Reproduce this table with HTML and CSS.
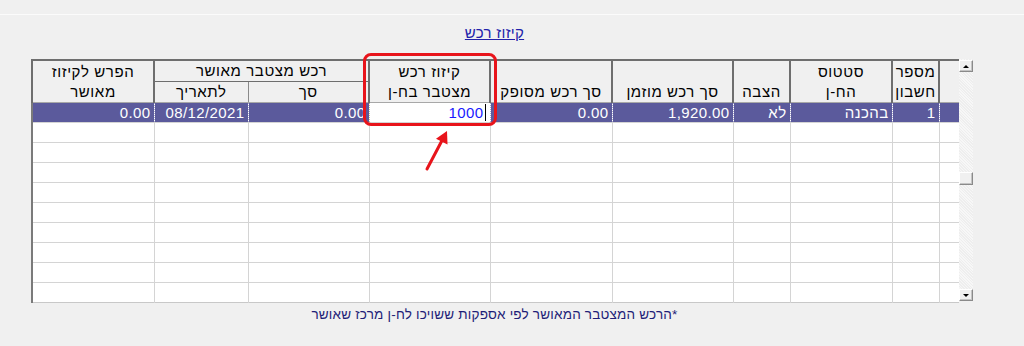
FILE: index.html
```html
<!DOCTYPE html>
<html lang="he">
<head>
<meta charset="utf-8">
<title>קיזוז רכש</title>
<link rel="stylesheet" href="styles.css">
</head>
<body>
<div class="topline"></div>
<div class="panel">
  <div class="title"><a href="#">קיזוז רכש</a></div>
  <div class="gridbox">
    <table class="grid" dir="rtl">
      <colgroup>
        <col style="width:20px"><col style="width:47px"><col style="width:102px"><col style="width:57px"><col style="width:121px"><col style="width:122px"><col style="width:121px"><col style="width:121px"><col style="width:94px"><col style="width:122px">
      </colgroup>
      <thead>
        <tr class="h1">
          <th rowspan="2" class="sel"></th>
          <th rowspan="2">מספר<br>חשבון</th>
          <th rowspan="2">סטטוס<br>הח-ן</th>
          <th rowspan="2">הצבה</th>
          <th rowspan="2">סך רכש מוזמן</th>
          <th rowspan="2">סך רכש מסופק</th>
          <th rowspan="2">קיזוז רכש<br>מצטבר בח-ן</th>
          <th colspan="2" class="group">רכש מצטבר מאושר</th>
          <th rowspan="2">הפרש לקיזוז<br>מאושר</th>
        </tr>
        <tr class="h2">
          <th>סך</th>
          <th>לתאריך</th>
        </tr>
      </thead>
      <tbody>
        <tr class="active">
          <td class="sel"></td>
          <td>1</td>
          <td>בהכנה</td>
          <td>לא</td>
          <td dir="ltr" class="num">1,920.00</td>
          <td dir="ltr" class="num">0.00</td>
          <td class="edit"><span class="caret">1000</span></td>
          <td dir="ltr" class="num">0.00</td>
          <td dir="ltr" class="num">08/12/2021</td>
          <td dir="ltr" class="num">0.00</td>
        </tr>
        <tr><td class="sel"></td><td></td><td></td><td></td><td></td><td></td><td></td><td></td><td></td><td></td></tr>
        <tr><td class="sel"></td><td></td><td></td><td></td><td></td><td></td><td></td><td></td><td></td><td></td></tr>
        <tr><td class="sel"></td><td></td><td></td><td></td><td></td><td></td><td></td><td></td><td></td><td></td></tr>
        <tr><td class="sel"></td><td></td><td></td><td></td><td></td><td></td><td></td><td></td><td></td><td></td></tr>
        <tr><td class="sel"></td><td></td><td></td><td></td><td></td><td></td><td></td><td></td><td></td><td></td></tr>
        <tr><td class="sel"></td><td></td><td></td><td></td><td></td><td></td><td></td><td></td><td></td><td></td></tr>
        <tr><td class="sel"></td><td></td><td></td><td></td><td></td><td></td><td></td><td></td><td></td><td></td></tr>
        <tr><td class="sel"></td><td></td><td></td><td></td><td></td><td></td><td></td><td></td><td></td><td></td></tr>
        <tr><td class="sel"></td><td></td><td></td><td></td><td></td><td></td><td></td><td></td><td></td><td></td></tr>
      </tbody>
    </table>
    <div class="scrollbar">
      <div class="sbtn up"><span class="tri-up"></span></div>
      <div class="track">
        <div class="thumb"></div>
      </div>
      <div class="sbtn down"><span class="tri-down"></span></div>
    </div>
  </div>
  <div class="note" dir="rtl">*הרכש המצטבר המאושר לפי אספקות ששויכו לח-ן מרכז שאושר</div>
</div>

<div class="highlight"></div>
<svg class="arrow" width="40" height="50" viewBox="0 0 40 50">
  <line x1="7" y1="44" x2="22" y2="15.5" stroke="#e8141b" stroke-width="3" stroke-linecap="round"/>
  <polygon points="27,6 27.5,19.5 16,13.8" fill="#e8141b"/>
</svg>
</body>
</html>
```

FILE: styles.css
```css
html, body {
  margin: 0;
  padding: 0;
}
body {
  background: #f0f0f0;
  font-family: "Liberation Sans", "DejaVu Sans", Arial, sans-serif;
  font-size: 15px;
  color: #000;
  width: 1024px;
  height: 346px;
  overflow: hidden;
  position: relative;
}
.topline {
  height: 14px;
  border-bottom: 1px solid #fbfbfb;
}
.panel {
  padding-left: 31px;
  width: 942px;
}
.title {
  width: 927px;
  height: 44px;
  box-sizing: border-box;
  padding-top: 9px;
  text-align: center;
  line-height: 18px;
  font-size: 15px;
  letter-spacing: 0.3px;
}
.title a {
  color: #2222aa;
  text-decoration: underline;
}
.gridbox {
  display: flex;
  align-items: flex-start;
}
.grid {
  width: 927px;
  table-layout: fixed;
  border-collapse: collapse;
  background: #fff;
  border-left: 2px solid #7a7a7a;
  border-bottom: 1px solid #c8c8c8;
  letter-spacing: 0.4px;
  font-size: 15px;
}
.grid th {
  background: #f0f0f0;
  font-weight: normal;
  text-align: center;
  vertical-align: bottom;
  line-height: 20px;
  padding: 0;
  border-top: 2px solid #6e6e6e;
  border-left: 2px solid #6e6e6e;
  border-bottom: 1px solid #a8a8a8;
  white-space: nowrap;
  overflow: hidden;
  letter-spacing: 0.6px;
}
.grid th.sel {
  border-left: 2px solid #6e6e6e;
  border-top: 2px solid #6e6e6e;
}
.grid tr.h1 th {
  height: 19px;
}
.grid tr.h2 th {
  height: 20px;
  border-top: 1px solid #6e6e6e;
}
.grid th.group {
  border-bottom: 1px solid #6e6e6e;
}
.grid tr.h2 th:first-child {
  border-left: 1px solid #8a8a8a;
}
.grid td {
  height: 19px;
  padding: 0 3px 0 0;
  text-align: right;
  line-height: 19px;
  white-space: nowrap;
  overflow: hidden;
  border-left: 1px solid #d4d4d4;
  border-top: 1px solid #d4d4d4;
}
.grid td.num {
  text-align: right;
}
.grid tr.active td {
  background: #5b5a9c;
  color: #fff;
  border-left: 1px dotted #a9a8cc;
  border-top: 1px dotted #8a89b8;
  border-bottom: 1px dotted #8a89b8;
}
.grid tr.active td.edit {
  background: #fff;
  color: #1a1aff;
  border: 1px dotted #c9c48a;
  padding-right: 4px;
}
.caret {
  border-right: 1px solid #000;
  padding-right: 1px;
}
.scrollbar {
  width: 15px;
  height: 242px;
  display: flex;
  flex-direction: column;
  background: #f5f5f5;
  background-image: repeating-linear-gradient(45deg, #eeeeee 0 1px, #f7f7f7 1px 2px);
}
.sbtn {
  height: 12px;
  box-sizing: border-box;
  background: #f0f0f0;
  border: 1px solid;
  border-color: #ffffff #8a8a8a #8a8a8a #ffffff;
  box-shadow: inset -1px -1px 0 #c4c4c4;
  display: flex;
  align-items: center;
  justify-content: center;
}
.sbtn.up {
  margin-top: 1px;
}
.track {
  flex: 1;
}
.thumb {
  margin-top: 100px;
  height: 13px;
  box-sizing: border-box;
  background: #f0f0f0;
  border: 1px solid;
  border-color: #ffffff #8a8a8a #8a8a8a #ffffff;
  box-shadow: inset -1px -1px 0 #c4c4c4;
}
.tri-up {
  width: 0;
  height: 0;
  border-left: 3px solid transparent;
  border-right: 3px solid transparent;
  border-bottom: 3px solid #000;
}
.tri-down {
  width: 0;
  height: 0;
  border-left: 3px solid transparent;
  border-right: 3px solid transparent;
  border-top: 3px solid #000;
}
.note {
  width: 927px;
  text-align: center;
  color: #1e1e78;
  font-size: 13.5px;
  letter-spacing: 0.2px;
  padding-top: 3px;
  line-height: 18px;
}
.highlight {
  position: absolute;
  left: 363px;
  top: 53px;
  width: 134px;
  height: 73px;
  box-sizing: border-box;
  border: 3px solid #e8141b;
  border-radius: 8px;
}
.arrow {
  position: absolute;
  left: 420px;
  top: 125px;
}
```
